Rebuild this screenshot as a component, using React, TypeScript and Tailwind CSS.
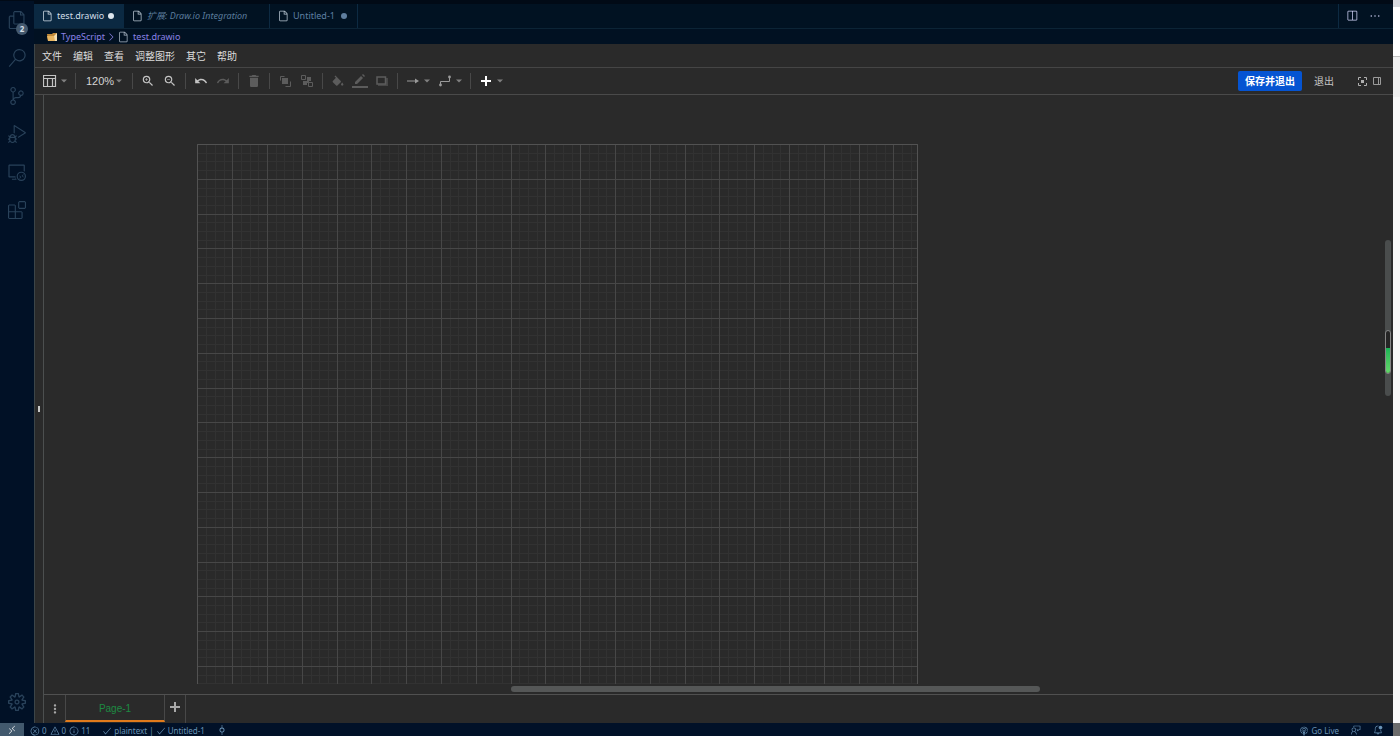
import type { ReactNode } from 'react'
import {
  VscBellDot,
  VscBroadcast,
  VscCheck,
  VscChevronRight,
  VscDebugAlt,
  VscEllipsis,
  VscError,
  VscExtensions,
  VscFeedback,
  VscFile,
  VscFiles,
  VscGitCommit,
  VscInfo,
  VscRemote,
  VscRemoteExplorer,
  VscSearch,
  VscSettingsGear,
  VscSourceControl,
  VscSplitHorizontal,
  VscWarning,
} from 'react-icons/vsc'
import { MdDelete, MdMoreVert, MdRedo, MdUndo, MdZoomIn, MdZoomOut } from 'react-icons/md'

const activities = [
  { label: 'Explorer', icon: <VscFiles />, badge: 2 },
  { label: 'Search', icon: <VscSearch /> },
  { label: 'Source Control', icon: <VscSourceControl /> },
  { label: 'Run and Debug', icon: <VscDebugAlt /> },
  { label: 'Remote Explorer', icon: <VscRemoteExplorer /> },
  { label: 'Extensions', icon: <VscExtensions /> },
]

const menus = ['文件', '编辑', '查看', '调整图形', '其它', '帮助']

/* ── Small shared pieces ── */

function Caret() {
  return (
    <svg viewBox="0 0 6 4" className="w-1.5 h-1 shrink-0" aria-hidden="true">
      <path d="M0 .5h6L3 3.5z" fill="currentColor" />
    </svg>
  )
}

function Separator() {
  return <span className="w-px h-4 mx-1 shrink-0 bg-[#484848]" />
}

function ToolButton({ label, dim, menu, children }: { label: string; dim?: boolean; menu?: boolean; children: ReactNode }) {
  return (
    <button
      type="button"
      aria-label={label}
      className={`flex items-center h-6 shrink-0 ${menu ? 'w-8' : 'w-[22px]'} ${dim ? 'text-[#5c5c5c]' : 'text-[#c4c4c4]'}`}
    >
      <span className="flex w-[22px] shrink-0 items-center justify-center">{children}</span>
      {menu && <span className="text-[#808080]"><Caret /></span>}
    </button>
  )
}

function Plus({ className }: { className: string }) {
  return (
    <svg viewBox="0 0 10 10" className={className} aria-hidden="true">
      <path d="M4 0h2v4h4v2H6v4H4V6H0V4h4z" fill="currentColor" />
    </svg>
  )
}

/* ── Activity bar ── */

function ActivityBar() {
  return (
    <nav className="flex w-[34px] shrink-0 flex-col items-center bg-[#011126] text-lg text-[#29425a]">
      <div className="h-px w-full bg-[#010a16]" />
      {activities.map(({ label, icon, badge }) => (
        <button key={label} type="button" aria-label={label} className="relative flex h-[38px] w-full items-center justify-center">
          {icon}
          {badge && (
            <span className="absolute right-1.5 bottom-1 flex h-3 w-3 items-center justify-center rounded-full bg-[#44596e] text-[8px] font-bold text-[#d5dfe8]">
              {badge}
            </span>
          )}
        </button>
      ))}
      <button type="button" aria-label="Manage" className="mt-auto flex h-[42px] w-full items-center justify-center">
        <VscSettingsGear />
      </button>
    </nav>
  )
}

/* ── Editor tabs and breadcrumb ── */

function EditorTabs() {
  return (
    <div className="flex h-[29px] shrink-0 border-t-4 border-b border-t-[#010a16] border-b-[#0c2436] bg-[#011222] text-[9px] leading-4">
      <button type="button" className="flex w-[90px] shrink-0 items-center bg-[#0b2942] pl-[7px] text-[#d2dee7]">
        <VscFile className="mr-1 h-3 w-3" />
        test.drawio
        <span className="ml-1 h-1.5 w-1.5 rounded-full bg-[#dde6ee]" />
      </button>
      <button type="button" className="flex w-[146px] shrink-0 items-center border-r border-[#0d2a42] pl-[7px] text-[#5b7c9c]">
        <VscFile className="mr-1 h-3 w-3 text-[#b9c6d2]" />
        <span className="italic">扩展: Draw.io Integration</span>
      </button>
      <button type="button" className="flex w-[88px] shrink-0 items-center border-r border-[#0d2a42] pl-[7px] text-[#5f80a2]">
        <VscFile className="mr-1 h-3 w-3 text-[#b9c6d2]" />
        Untitled-1
        <span className="ml-1.5 h-1.5 w-1.5 rounded-full bg-[#5f7e9e]" />
      </button>
      <div className="ml-auto flex w-[55px] items-center gap-[11px] border-l border-[#0d2a42] pl-[7px] text-xs text-[#d0d2f6]">
        <button type="button" aria-label="Split editor"><VscSplitHorizontal /></button>
        <button type="button" aria-label="More actions"><VscEllipsis /></button>
      </div>
    </div>
  )
}

function Breadcrumb() {
  return (
    <div className="flex h-[15px] shrink-0 items-center bg-[#011122] pt-px pl-3 text-[9px] leading-[14px] text-[#8b82e6]">
      <svg viewBox="0 0 12 10" className="mr-[3px] h-2.5 w-3" aria-hidden="true">
        <path d="M1 2h5l1-1h4v8H2z" fill="#c08a3a" />
        <path d="M2 9 1 4h7l2 5z" fill="#e8b560" />
        <path d="m8 4 3-3v8H9z" fill="#f6e2b4" />
      </svg>
      <a href="#typescript">TypeScript</a>
      <VscChevronRight className="h-3 w-3" />
      <VscFile className="mr-1 h-3 w-3 text-[#aab6c4]" />
      <a href="#test">test.drawio</a>
    </div>
  )
}

/* ── draw.io menu bar and toolbar ── */

function MenuBar() {
  return (
    <div className="flex h-6 shrink-0 items-center gap-[11px] border-b border-[#454545] pt-0.5 pl-[7px] text-[10px] text-[#dcdcdc]">
      {menus.map((m) => (
        <button key={m} type="button">{m}</button>
      ))}
    </div>
  )
}

function Toolbar() {
  return (
    <div className="flex h-[27px] shrink-0 items-center border-b border-[#4a4a4a] pl-1">
      <ToolButton label="View" menu>
        <svg viewBox="0 0 14 14" className="h-3.5 w-3.5" fill="none" stroke="currentColor" aria-hidden="true">
          <path d="M.5 1.5h12v11H.5zM.5 4.5h12M4.5 4.5v8M9.5 4.5v8" strokeWidth="1.2" />
        </svg>
      </ToolButton>
      <Separator />
      <label className="relative flex w-12 shrink-0 items-center text-[#808080]">
        <select aria-label="Zoom" defaultValue="120%" className="w-full appearance-none bg-transparent pl-1.5 font-['Liberation_Sans',sans-serif] text-[11px] text-[#d4d4d4]">
          <option>100%</option>
          <option>120%</option>
          <option>150%</option>
        </select>
        <span className="pointer-events-none absolute right-1.5"><Caret /></span>
      </label>
      <Separator />
      <ToolButton label="Zoom in"><MdZoomIn className="h-3.5 w-3.5" /></ToolButton>
      <ToolButton label="Zoom out"><MdZoomOut className="h-3.5 w-3.5" /></ToolButton>
      <Separator />
      <ToolButton label="Undo"><MdUndo className="h-3.5 w-3.5" /></ToolButton>
      <ToolButton label="Redo" dim><MdRedo className="h-3.5 w-3.5" /></ToolButton>
      <Separator />
      <ToolButton label="Delete" dim><MdDelete className="h-4 w-4" /></ToolButton>
      <Separator />
      <ToolButton label="To front" dim>
        <svg viewBox="0 0 12 12" className="h-3 w-3" fill="none" stroke="currentColor" aria-hidden="true">
          <path d="M3 3h6v6H3z" fill="currentColor" stroke="none" />
          <path d="M1.500 5.500v-4h4M6.500 11.500h5v-5" />
        </svg>
      </ToolButton>
      <ToolButton label="To back" dim>
        <svg viewBox="0 0 12 12" className="h-3 w-3" fill="none" stroke="currentColor" aria-hidden="true">
          <path d="M.5 .5h4v4h-4zM7.500 7.500h4v4h-4z" />
          <path d="M6 2h4v4H8v2H6v2H2V6h4z" fill="currentColor" stroke="none" />
        </svg>
      </ToolButton>
      <Separator />
      <ToolButton label="Fill color" dim>
        <svg viewBox="2 -1 20 20" className="h-3 w-3" fill="currentColor" aria-hidden="true">
          <path d="M16.560 8.940 7.620 0 6.210 1.410l2.380 2.380-5.150 5.150a1.490 1.490 0 0 0 0 2.120l5.500 5.500c.29.29.68.44 1.060.44s.77-.15 1.060-.44l5.500-5.500c.59-.58.59-1.530 0-2.120z" />
          <path d="M19 11.500s-2 2.170-2 3.500c0 1.100.9 2 2 2s2-.9 2-2c0-1.330-2-3.500-2-3.500z" />
        </svg>
      </ToolButton>
      <ToolButton label="Line color" dim>
        <svg viewBox="0 0 16 14" className="h-3.5 w-4" aria-hidden="true">
          <path d="M3 10V8l6-6 2 2-6 6zM10 1l1-1 2 2-1 1zM0 12h16v2H0z" fill="currentColor" />
        </svg>
      </ToolButton>
      <ToolButton label="Shadow" dim>
        <svg viewBox="0 0 12 10" className="h-2.5 w-3" aria-hidden="true">
          <path d="M2 8h8V2h2v8H2z" fill="currentColor" opacity=".6" />
          <path d="M1 1h8.500v7H1z" fill="none" stroke="currentColor" strokeWidth="1.500" />
        </svg>
      </ToolButton>
      <Separator />
      <ToolButton label="Connection" menu>
        <svg viewBox="0 0 12 6" className="h-1.5 w-3" aria-hidden="true">
          <path d="M0 2.500h8V.5L12 3 8 5.500v-2H0z" fill="#9a9a9a" />
        </svg>
      </ToolButton>
      <ToolButton label="Waypoints" menu>
        <svg viewBox="0 0 12 12" className="h-3 w-3" aria-hidden="true">
          <path d="M1.500 10V6.500h9V2" fill="none" stroke="#9a9a9a" />
          <circle cx="1.500" cy="10" r="1.400" fill="#9a9a9a" />
          <circle cx="10.500" cy="2" r="1.400" fill="#9a9a9a" />
        </svg>
      </ToolButton>
      <Separator />
      <ToolButton label="Insert" menu>
        <Plus className="h-2.5 w-2.5 text-white" />
      </ToolButton>

      <div className="ml-auto flex items-center pr-3 text-[10px]">
        <button type="button" className="h-5 rounded-xs bg-[#0554d2] px-[7px] font-bold text-white">保存并退出</button>
        <button type="button" className="ml-3 text-[#c4c4c4]">退出</button>
        <button type="button" aria-label="Fullscreen" className="ml-6 text-[#b0b0b0]">
          <svg viewBox="0 0 9 9" className="h-[9px] w-[9px]" fill="none" stroke="currentColor" aria-hidden="true">
            <path d="M.5 3V.5H3M6 .5h2.500V3M8.500 6v2.500H6M3 8.500H.5V6" />
            <path d="M3 3h3v3H3z" fill="currentColor" stroke="none" />
          </svg>
        </button>
        <button type="button" aria-label="Format" className="ml-1.5 text-[#9a9a9a]">
          <svg viewBox="0 0 8 8" className="h-2 w-2" fill="none" stroke="currentColor" aria-hidden="true">
            <path d="M.5 .5h7v7h-7zM5.500 .5v7" />
          </svg>
        </button>
      </div>
    </div>
  )
}

/* ── Drawing page with its grid ── */

const GRID = 34.8
const PAGE_W = 721
const PAGE_H = 1018

function gridPath(step: number) {
  let d = ''
  for (let i = 0; i * step < PAGE_W; i++) d += `M${Math.ceil(i * step) + 0.5} 0V${PAGE_H}`
  for (let i = 0; i * step < PAGE_H; i++) d += `M0 ${Math.round(i * step) + 0.5}H${PAGE_W}`
  return d
}

function PageGrid() {
  return (
    <svg width={PAGE_W} height={PAGE_H} className="shrink-0" fill="none" aria-hidden="true">
      <path d={gridPath(GRID / 4)} stroke="#323232" />
      <path d={gridPath(GRID)} stroke="#474747" />
      <path d={`M.5 .5h${PAGE_W - 1}v${PAGE_H - 1}h-${PAGE_W - 1}z`} stroke="#525252" />
    </svg>
  )
}

function Canvas() {
  return (
    <div className="relative flex min-h-0 flex-1 flex-col">
      <div className="min-h-0 flex-1 overflow-hidden pt-[49px] pl-[153px]">
        <PageGrid />
      </div>
      <div className="flex h-2.5 shrink-0 items-center">
        <div className="ml-[34.6%] h-1.5 w-[39.2%] rounded-full bg-[#555757]" />
      </div>
      {/* vertical scrollbar with the level gauge on top */}
      <div className="absolute top-[145px] right-0.5 h-[156px] w-1.5 rounded-full bg-[#4a4d4d]">
        <div className="absolute top-[90px] left-0 flex h-11 w-1.5 flex-col justify-end overflow-hidden rounded-sm border border-[#858585] bg-[#252525]">
          <div className="h-[25px] bg-linear-to-b from-[#16b456] to-[#63d66a]" />
        </div>
      </div>
    </div>
  )
}

function PageTabs() {
  return (
    <div className="flex h-[29px] shrink-0 border-t border-[#505050] text-[#a8a8a8]">
      <button type="button" aria-label="Pages" className="flex w-[21px] items-center justify-center">
        <MdMoreVert className="h-3.5 w-3.5" />
      </button>
      <button type="button" className="mb-px w-[100px] border-x border-b-2 border-x-[#484848] border-b-[#e07a1c] pt-0.5 font-['Liberation_Sans',sans-serif] text-[10px] text-[#1d8a42]">
        Page-1
      </button>
      <button type="button" aria-label="Insert page" className="flex w-[21px] items-center justify-center border-r border-[#484848] pb-1">
        <Plus className="h-2.5 w-2.5" />
      </button>
    </div>
  )
}

/* ── Status bar ── */

function StatusBar() {
  return (
    <footer className="flex h-[13px] shrink-0 items-center bg-[#011128] text-[8px] leading-[13px] text-[#6a93b6]">
      <button type="button" aria-label="Remote" className="flex h-full w-6 items-center justify-center bg-[#42596d] text-white">
        <VscRemote className="h-2.5 w-2.5" />
      </button>
      <button type="button" className="ml-1.5 flex items-center gap-0.5 pt-0.5">
        <VscError className="h-2.5 w-2.5" />0
        <VscWarning className="ml-px h-2.5 w-2.5" />0
        <VscInfo className="ml-px h-2.5 w-2.5" />11
      </button>
      <button type="button" className="ml-3 flex items-center gap-0.5 pt-0.5">
        <VscCheck className="h-2.5 w-2.5" />plaintext |
        <VscCheck className="h-2.5 w-2.5" />Untitled-1
      </button>
      <button type="button" aria-label="Commit" className="ml-3"><VscGitCommit className="h-2.5 w-2.5" /></button>
      <div className="ml-auto flex items-center gap-3 pr-2.5">
        <button type="button" className="flex items-center gap-0.5 pt-0.5"><VscBroadcast className="h-2.5 w-2.5" />Go Live</button>
        <button type="button" aria-label="Feedback"><VscFeedback className="h-2.5 w-2.5" /></button>
        <button type="button" aria-label="Notifications"><VscBellDot className="h-2.5 w-2.5" /></button>
      </div>
    </footer>
  )
}

export default function App() {
  return (
    <div className="flex h-screen overflow-hidden bg-[#f3f3f3] font-['Noto_Sans','Noto_Sans_CJK_SC',sans-serif]">
      <div className="flex min-w-0 flex-1 flex-col">
        <div className="flex min-h-0 flex-1">
          <ActivityBar />
          <main className="flex min-w-0 flex-1 flex-col bg-[#2a2a2a]">
            <EditorTabs />
            <Breadcrumb />
            <div className="flex min-h-0 flex-1 flex-col border-l border-[#3c4548]">
              <MenuBar />
              <Toolbar />
              <div className="flex min-h-0 flex-1">
                <div className="flex w-2 shrink-0 items-center justify-center">
                  <span className="h-1.5 w-0.5 bg-[#c8c8c8]" />
                </div>
                <div className="flex min-w-0 flex-1 flex-col border-l border-[#4c4f4f]">
                  <Canvas />
                  <PageTabs />
                </div>
              </div>
            </div>
          </main>
        </div>
        <StatusBar />
      </div>

      {/* edge of the window behind */}
      <div className="flex w-[7px] shrink-0 flex-col">
        <div className="h-[7px] bg-[#d9dbe0]" />
        <div className="h-[50px] border-b border-[#c4c4c4] bg-white" />
        <div className="h-10 bg-[#f0f0f0]" />
        <div className="flex-1 bg-[#f8f8f8]" />
        <div className="h-[13px] bg-[#6c6c6c]" />
      </div>
    </div>
  )
}
